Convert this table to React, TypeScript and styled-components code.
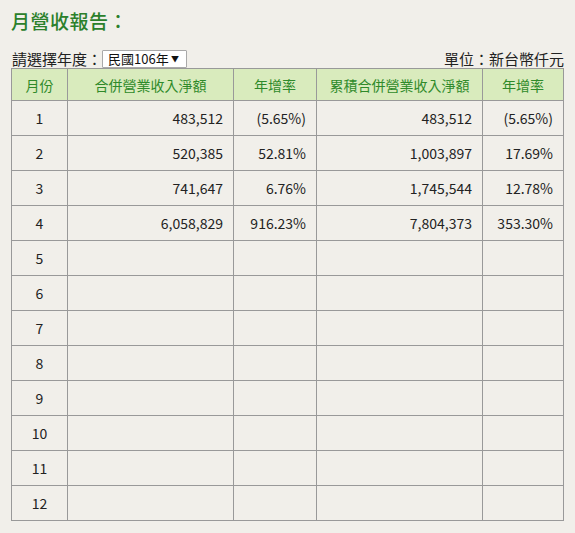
import React from "react";
import styled, { createGlobalStyle } from "styled-components";

const Global = createGlobalStyle`
  html, body { margin: 0; padding: 0; background: #f1efea; }
  body { font-family: "Noto Sans CJK TC", "Noto Sans", sans-serif; color: #222; }
`;

const Page = styled.div`
  padding: 8px 12px 0 11px;
  width: 553px;
`;

const Title = styled.h2`
  margin: 0;
  font-size: 19px;
  line-height: 26px;
  font-weight: 500;
  color: #2b802b;
  letter-spacing: 0.5px;
`;

const Toolbar = styled.div`
  margin-top: 16px;
  display: flex;
  align-items: flex-end;
  justify-content: space-between;
  font-size: 15px;
  line-height: 18px;
  height: 18px;
  padding-left: 1px;
`;

const Label = styled.div`
  display: flex;
  align-items: center;
`;

const Select = styled.div`
  display: inline-flex;
  align-items: center;
  justify-content: space-between;
  box-sizing: border-box;
  width: 85px;
  height: 18px;
  border: 1px solid #a9a9a9;
  border-radius: 1px;
  background: #fff;
  font-size: 13px;
  padding: 0 7px 0 5px;
  color: #111;
`;

const Arrow = styled.span`
  font-size: 8px;
  line-height: 1;
`;

const Unit = styled.div`
  color: #222;
`;

const Table = styled.table`
  border-collapse: collapse;
  width: 553px;
  table-layout: fixed;
  font-size: 14px;
`;

const Th = styled.th`
  background: #d9ebbd;
  color: #2f8a2a;
  font-weight: 400;
  border: 1px solid #999;
  height: 31px;
  padding: 0;
  text-align: center;
`;

const Td = styled.td<{ $align?: string }>`
  border: 1px solid #999;
  height: 34px;
  padding: 0 10px;
  text-align: ${(p) => p.$align || "right"};
  color: #222;
`;

const rows: (string[] | null)[] = [
  ["483,512", "(5.65%)", "483,512", "(5.65%)"],
  ["520,385", "52.81%", "1,003,897", "17.69%"],
  ["741,647", "6.76%", "1,745,544", "12.78%"],
  ["6,058,829", "916.23%", "7,804,373", "353.30%"],
];

export default function App() {
  return (
    <>
      <Global />
      <Page>
        <Title>月營收報告：</Title>
        <Toolbar>
          <Label>
            請選擇年度：
            <Select>
              <span>民國106年</span>
              <Arrow>▼</Arrow>
            </Select>
          </Label>
          <Unit>單位：新台幣仟元</Unit>
        </Toolbar>
        <Table>
          <colgroup>
            <col style={{ width: 56 }} />
            <col style={{ width: 166 }} />
            <col style={{ width: 83 }} />
            <col style={{ width: 166 }} />
            <col style={{ width: 81 }} />
          </colgroup>
          <thead>
            <tr>
              <Th>月份</Th>
              <Th>合併營業收入淨額</Th>
              <Th>年增率</Th>
              <Th>累積合併營業收入淨額</Th>
              <Th>年增率</Th>
            </tr>
          </thead>
          <tbody>
            {Array.from({ length: 12 }, (_, i) => {
              const r = rows[i];
              return (
                <tr key={i}>
                  <Td $align="center">{i + 1}</Td>
                  <Td>{r ? r[0] : ""}</Td>
                  <Td>{r ? r[1] : ""}</Td>
                  <Td>{r ? r[2] : ""}</Td>
                  <Td>{r ? r[3] : ""}</Td>
                </tr>
              );
            })}
          </tbody>
        </Table>
      </Page>
    </>
  );
}
